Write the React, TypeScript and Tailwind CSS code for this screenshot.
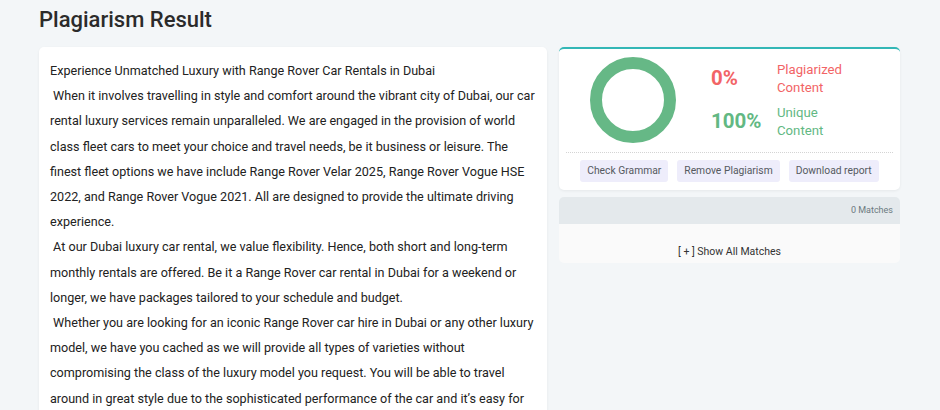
import React from "react";

const paragraphs = [
  "Experience Unmatched Luxury with Range Rover Car Rentals in Dubai",
  "\u00a0When it involves travelling in style and comfort around the vibrant city of Dubai, our car rental luxury services remain unparalleled. We are engaged in the provision of world class fleet cars to meet your choice and travel needs, be it business or leisure. The finest fleet options we have include Range Rover Velar 2025, Range Rover Vogue HSE 2022, and Range Rover Vogue 2021. All are designed to provide the ultimate driving experience.",
  "\u00a0At our Dubai luxury car rental, we value flexibility. Hence, both short and long-term monthly rentals are offered. Be it a Range Rover car rental in Dubai for a weekend or longer, we have packages tailored to your schedule and budget.",
  "\u00a0Whether you are looking for an iconic Range Rover car hire in Dubai or any other luxury model, we have you cached as we will provide all types of varieties without compromising the class of the luxury model you request. You will be able to travel around in great style due to the sophisticated performance of the car and it\u2019s easy for you to drive around the city.",
];

export default function App() {
  return (
    <div
      className="w-[940px] h-[410px] overflow-hidden bg-[#f3f6f8] px-[39px] text-[#333]"
      style={{ fontFamily: "Roboto, 'Liberation Sans', sans-serif" }}
    >
      <h1 className="pt-[6px] h-[47px] text-[22px] leading-[27px] font-medium text-[#2b2b2b]">
        Plagiarism Result
      </h1>
      <div className="flex gap-[12px] items-start">
        <div className="w-[508px] shrink-0 bg-white rounded-[5px] shadow-[0_1px_3px_rgba(0,0,0,0.06)] px-[11px] pt-[11px] pb-4 text-[12.6px] leading-[25.2px] text-[#222]">
          {paragraphs.map((p, i) => (
            <p key={i}>{p}</p>
          ))}
        </div>
        <div className="w-[341px] shrink-0 flex flex-col gap-[7px]">
          <div className="bg-white rounded-[5px] border-t-2 border-[#33b7b6] shadow-[0_1px_3px_rgba(0,0,0,0.06)] px-[7px] pt-[8px] pb-[8px]">
            <div className="flex items-center">
              <div className="pl-[24px]">
                <svg width="86" height="86" viewBox="0 0 86 86">
                  <circle cx="43" cy="43" r="37" fill="none" stroke="#66b886" strokeWidth="12" />
                </svg>
              </div>
              <div className="ml-[35px] flex flex-col gap-[8px]">
                <div className="flex items-center">
                  <div className="w-[66px] text-[20.5px] font-bold text-[#f26466]">0%</div>
                  <div className="text-[13.2px] leading-[17.5px] text-[#f26466]">
                    Plagiarized
                    <br />
                    Content
                  </div>
                </div>
                <div className="flex items-center">
                  <div className="w-[66px] text-[20.5px] font-bold text-[#62b883]">100%</div>
                  <div className="text-[13.2px] leading-[17.5px] text-[#62b883]">
                    Unique
                    <br />
                    Content
                  </div>
                </div>
              </div>
            </div>
            <div className="mt-[9px] border-t border-dotted border-[#d4d4d4]" />
            <div className="mt-[7px] flex justify-center gap-[9px]">
              {["Check Grammar", "Remove Plagiarism", "Download report"].map((b) => (
                <div
                  key={b}
                  className="h-[22px] px-[7px] rounded-[3px] bg-[#eeedfb] text-[10.3px] leading-[22px] text-[#555a60]"
                >
                  {b}
                </div>
              ))}
            </div>
          </div>
          <div className="rounded-[5px] overflow-hidden">
            <div className="h-[27px] bg-[#e4e9ec] flex items-center justify-end pr-[7px] text-[9px] text-[#6c7a80]">
              0 Matches
            </div>
            <div className="h-[39px] bg-[#fafafa] flex items-end justify-center pb-[3px] text-[10.5px] text-[#333] whitespace-pre">
              {"[ + ] Show All Matches"}
            </div>
          </div>
        </div>
      </div>
    </div>
  );
}
